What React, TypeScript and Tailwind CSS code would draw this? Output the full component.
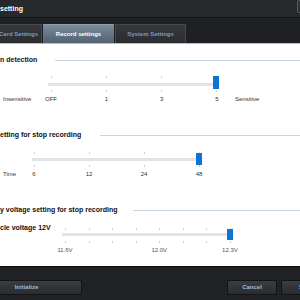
import React from "react";

function Ticks({ n, cls }: { n: number; cls: string }) {
  return (
    <div className={"flex justify-between " + cls}>
      {Array.from({ length: n }).map((_, i) => (
        <div key={i} className="w-px h-[2px] bg-[#cfcfcf]" />
      ))}
    </div>
  );
}

function Title({ text, boxCls }: { text: string; boxCls: string }) {
  return (
    <div className="flex items-center h-[8px]">
      <div className={"shrink-0 whitespace-nowrap text-[7px] leading-[8px] font-bold text-[#111] " + boxCls}>{text}</div>
      <div className="flex-1 h-px bg-[#c8d5e1]" />
    </div>
  );
}

function Lbl({ t }: { t: string }) {
  return <div className="w-[20px] text-center whitespace-nowrap">{t}</div>;
}

export default function App() {
  return (
    <div className="w-[300px] h-[300px] overflow-hidden flex flex-col font-['Liberation_Sans',Arial,sans-serif] bg-[#1f2023]">
      {/* title bar */}
      <div className="h-[18px] shrink-0 flex items-start bg-[#27282b] border-b border-[#121314]">
        <div className="text-white text-[7px] font-bold leading-[17px] whitespace-nowrap">setting</div>
        <div className="flex-1" />
        <div className="shrink-0 w-[12px] h-[13px] mr-[-9px] border border-[#5b5e63] rounded-[2px] bg-[#2e3034]" />
      </div>
      {/* tabs */}
      <div className="h-[25px] shrink-0 flex items-end gap-px bg-[#1f2023]">
        <div className="w-[42px] h-[19px] shrink-0 flex items-center justify-end pr-[3px] bg-linear-to-b from-[#36383c] to-[#2a2c30] border-t border-r border-[#45484d] text-[6px] font-bold text-[#7e9ac2] whitespace-nowrap">
          Card Settings
        </div>
        <div className="w-[71px] h-[19px] shrink-0 flex items-center justify-center bg-linear-to-b from-[#7b8b9b] to-[#536170] border-t border-[#8d9cab] text-[6px] font-bold text-white whitespace-nowrap">
          Record settings
        </div>
        <div className="w-[71px] h-[19px] shrink-0 flex items-center justify-center bg-linear-to-b from-[#36383c] to-[#2a2c30] border-t border-l border-r border-[#45484d] text-[6px] font-bold text-[#7e9ac2] whitespace-nowrap">
          System Settings
        </div>
      </div>
      {/* content */}
      <div className="h-[223px] shrink-0 bg-white border-t border-[#b9bdc2] flex flex-col">
        <div className="mt-[12px]">
          <Title text="n detection" boxCls="w-[55px]" />
        </div>
        <div className="mt-[12px] ml-[48px] w-[171px] relative">
          <Ticks n={4} cls="pl-[3px] pr-[2px]" />
          <div className="mt-[5px] h-[3px] bg-[#e3e3e3]" />
          <div className="mt-[4px]">
            <Ticks n={4} cls="pl-[3px] pr-[2px]" />
          </div>
          <div className="absolute left-[165px] top-0 w-[6px] h-[13px] bg-[#0d74d5]" />
        </div>
        <div className="mt-[3px] h-[8px] flex items-center text-[6px] leading-[8px] text-[#333]">
          <div className="w-[41px] shrink-0 pl-[3px] whitespace-nowrap">Insensitive</div>
          <div className="w-[186px] shrink-0 flex justify-between">
            <Lbl t="OFF" />
            <Lbl t="1" />
            <Lbl t="3" />
            <Lbl t="5" />
          </div>
          <div className="pl-[8px] whitespace-nowrap">Sensitive</div>
        </div>

        <div className="mt-[28px]">
          <Title text="etting for stop recording" boxCls="w-[100px]" />
        </div>
        <div className="mt-[13px] ml-[32px] w-[170px] relative">
          <Ticks n={4} cls="pl-[2px] pr-[2px]" />
          <div className="mt-[4px] h-[3px] bg-[#e3e3e3]" />
          <div className="mt-[4px]">
            <Ticks n={4} cls="pl-[2px] pr-[2px]" />
          </div>
          <div className="absolute left-[164px] top-px w-[6px] h-[12px] bg-[#0d74d5]" />
        </div>
        <div className="mt-[3px] h-[8px] flex items-center text-[6px] leading-[8px] text-[#333]">
          <div className="w-[24px] shrink-0 pl-[3px] whitespace-nowrap">Time</div>
          <div className="w-[185px] shrink-0 flex justify-between">
            <Lbl t="6" />
            <Lbl t="12" />
            <Lbl t="24" />
            <Lbl t="48" />
          </div>
        </div>

        <div className="mt-[28px]">
          <Title text="y voltage setting for stop recording" boxCls="w-[133px]" />
        </div>
        <div className="mt-[10px] flex items-start">
          <div className="w-[62px] shrink-0 h-[8px] text-[7px] leading-[8px] font-bold text-[#111] whitespace-nowrap">cle voltage 12V</div>
          <div className="mt-[4px] w-[171px] shrink-0 relative">
            <Ticks n={8} cls="pl-[3px] pr-[2px]" />
            <div className="mt-[3px] h-[3px] bg-[#e3e3e3]" />
            <div className="mt-[5px]">
              <Ticks n={8} cls="pl-[3px] pr-[2px]" />
            </div>
            <div className="absolute left-[165px] top-px w-[6px] h-[11px] bg-[#0d74d5]" />
          </div>
        </div>
        <div className="mt-[3px] ml-[55px] w-[185px] h-[8px] flex justify-between items-center text-[6px] leading-[8px] text-[#555]">
          <Lbl t="11.6V" />
          <Lbl t="" />
          <Lbl t="" />
          <Lbl t="" />
          <Lbl t="12.0V" />
          <Lbl t="" />
          <Lbl t="" />
          <Lbl t="12.3V" />
        </div>
      </div>
      {/* footer */}
      <div className="h-[34px] shrink-0 flex items-start pt-[13px] bg-[#212225] border-t border-[#0e0f10]">
        <div className="ml-[-29px] w-[111px] h-[15px] shrink-0 flex items-center justify-center rounded-[2px] border border-[#131416] bg-linear-to-b from-[#3a3d42] to-[#2a2c30] text-[6px] font-bold text-[#aeb8c6]">
          Initialize
        </div>
        <div className="ml-[145px] w-[50px] h-[15px] shrink-0 flex items-center justify-center rounded-[2px] border border-[#131416] bg-linear-to-b from-[#3a3d42] to-[#2a2c30] text-[6px] font-bold text-[#aeb8c6]">
          Cancel
        </div>
        <div className="ml-[4px] w-[50px] h-[15px] shrink-0 flex items-center justify-center rounded-[2px] border border-[#131416] bg-linear-to-b from-[#3a3d42] to-[#2a2c30] text-[6px] font-bold text-[#8fb0d8]">
          Save
        </div>
      </div>
    </div>
  );
}
